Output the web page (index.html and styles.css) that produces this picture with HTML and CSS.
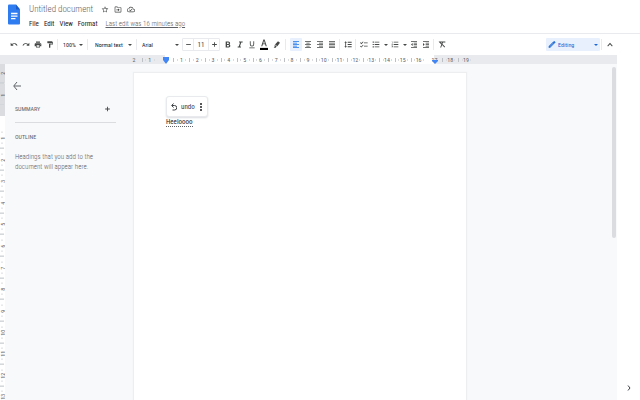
FILE: index.html
```html
<!DOCTYPE html>
<html lang="en">
<head>
<meta charset="utf-8">
<title>Untitled document</title>
<link rel="stylesheet" href="styles.css">
</head>
<body>
<header class="header">
  <svg class="logo" viewBox="0 0 12 20" aria-hidden="true">
    <path fill="#2f7cf0" d="M1 0h7l4 5v14a1 1 0 0 1-1 1H1a1 1 0 0 1-1-1V1a1 1 0 0 1 1-1z"/>
    <path fill="#1a5ccc" d="M8 0l4 5H8z"/>
    <path stroke="#fff" stroke-width="1.3" d="M3 9h6.500M3 11.600h6.500M3 14.200h4.500"/>
  </svg>
  <div class="header-text">
    <div class="title-row">
      <h1 class="title">Untitled document</h1>
      <button class="mini" aria-label="Star"><svg class="icon" viewBox="0 0 24 24"><path d="M22 9.240l-7.190-.620L12 2 9.190 8.630 2 9.240l5.460 4.730L5.820 21 12 17.270 18.180 21l-1.630-7.030L22 9.240zM12 15.400l-3.760 2.270 1-4.280-3.320-2.880 4.380-.380L12 6.100l1.710 4.040 4.380.380-3.320 2.880 1 4.280L12 15.400z"/></svg></button>
      <button class="mini" aria-label="Move"><svg class="icon" viewBox="0 0 24 24"><path d="M20 5h-8l-2-2H4a2 2 0 0 0-2 2v14c0 1.100.900 2 2 2h16c1.100 0 2-.900 2-2V7c0-1.100-.900-2-2-2zm0 14H4V5h5l2 2h9v12z"/><path d="M7 12h5V9l5 4-5 4v-3H7z"/></svg></button>
      <button class="mini" aria-label="Document status"><svg class="icon" viewBox="0 0 24 24"><path d="M19.350 10.040A7.490 7.490 0 0 0 12 4C9.110 4 6.600 5.640 5.350 8.040A5.994 5.994 0 0 0 0 14c0 3.310 2.690 6 6 6h13c2.760 0 5-2.240 5-5 0-2.640-2.050-4.780-4.650-4.960zM19 18H6c-2.210 0-4-1.790-4-4s1.790-4 4-4h.710C7.370 7.690 9.480 6 12 6c3.040 0 5.500 2.460 5.500 5.500v.500H19c1.660 0 3 1.340 3 3s-1.340 3-3 3zm-9-3.820l-2.090-2.090L6.500 13.500 10 17l6.010-6.010-1.410-1.410z"/></svg></button>
    </div>
    <nav class="menu">
      <button>File</button><button>Edit</button><button>View</button><button>Format</button>
      <a class="last-edit" href="#history">Last edit was 16 minutes ago</a>
    </nav>
  </div>
</header>

<div class="toolbar" role="toolbar">
  <button class="tool" aria-label="Undo"><svg class="icon" viewBox="0 0 24 24"><path d="M12.500 8c-2.650 0-5.050.990-6.900 2.600L2 7v9h9l-3.620-3.620A7.960 7.960 0 0 1 20.100 16l2.370-.780C21.080 11.030 17.150 8 12.500 8z"/></svg></button>
  <button class="tool" aria-label="Redo"><svg class="icon" viewBox="0 0 24 24"><path d="M18.400 10.600A10.490 10.490 0 0 0 1.540 15.220L3.900 16a8.002 8.002 0 0 1 12.720-3.620L13 16h9V7l-3.600 3.600z"/></svg></button>
  <button class="tool" aria-label="Print"><svg class="icon" viewBox="0 0 24 24"><path d="M19 8H5c-1.660 0-3 1.340-3 3v6h4v4h12v-4h4v-6c0-1.660-1.340-3-3-3zm-3 11H8v-5h8v5zm3-7a1 1 0 1 1 0-2 1 1 0 0 1 0 2zM18 3H6v4h12V3z"/></svg></button>
  <button class="tool" aria-label="Paint format"><svg class="icon" viewBox="0 0 24 24"><path d="M18 4V3c0-.550-.450-1-1-1H5c-.550 0-1 .450-1 1v4c0 .550.450 1 1 1h12c.550 0 1-.450 1-1V6h1v4H9v11c0 .550.450 1 1 1h2c.550 0 1-.450 1-1v-9h8V4h-3z"/></svg></button>
  <span class="sep"></span>
  <label class="drop zoom"><select aria-label="Zoom"><option>100%</option></select><svg class="caret" viewBox="0 0 4 2"><path d="M0 0h4L2 2z"/></svg></label>
  <span class="sep"></span>
  <label class="drop style"><select aria-label="Styles"><option>Normal text</option></select><svg class="caret" viewBox="0 0 4 2"><path d="M0 0h4L2 2z"/></svg></label>
  <span class="sep"></span>
  <label class="drop font"><select aria-label="Font"><option>Arial</option></select><svg class="caret" viewBox="0 0 4 2"><path d="M0 0h4L2 2z"/></svg></label>
  <div class="size">
    <button aria-label="Decrease font size"><svg class="icon" viewBox="0 0 24 24"><path d="M4 10.500h16v3H4z"/></svg></button>
    <input aria-label="Font size" value="11">
    <button aria-label="Increase font size"><svg class="icon" viewBox="0 0 24 24"><path d="M4 10.500h6.500V4h3v6.500H20v3h-6.500V20h-3v-6.500H4z"/></svg></button>
  </div>
  <button class="tool" aria-label="Bold"><svg class="icon" viewBox="0 0 24 24"><path d="M16.500 11.800c1.100-.800 1.900-2.100 1.900-3.300C18.400 5.500 16 3 13 3H5v18h9c2.900 0 5-2.300 5-5 0-1.900-1-3.500-2.500-4.200zM9 6h3.500a2.200 2.200 0 0 1 0 4.500H9V6zm4 12H9v-4.500h4a2.200 2.200 0 0 1 0 4.500z"/></svg></button>
  <button class="tool" aria-label="Italic"><svg class="icon" viewBox="0 0 24 24"><path d="M9 3v3h3.200L8.200 18H5v3h10v-3h-3.200l4-12H20V3z"/></svg></button>
  <button class="tool" aria-label="Underline"><svg class="icon" viewBox="0 0 24 24"><path d="M12 18a6.500 6.500 0 0 0 6.500-6.500V2H16v9.500a4 4 0 0 1-8 0V2H5.500v9.500A6.500 6.500 0 0 0 12 18zM4 21h16v2H4z"/></svg></button>
  <button class="tool" aria-label="Text color"><svg class="icon tall" viewBox="0 0 20 26" preserveAspectRatio="none"><path d="M8.500 1L3 17h2.800l1.500-4.500h5.400l1.500 4.500H17L11.500 1h-3zM8 10.500L10 4l2 6.500z"/><path fill="#000" d="M0 21h20v5H0z"/></svg></button>
  <button class="tool wide" aria-label="Highlight color"><svg class="icon" viewBox="0 0 24 24"><path d="M15 2l6 5-8 10-7-5zM5 13l6 5-3 4H2l3-4z"/></svg></button>
  <span class="sep"></span>
  <button class="tool active" aria-label="Left align"><svg class="icon" viewBox="0 0 24 24"><path d="M3 2h18v2.500H3zM3 6.500h12V9H3zM3 11h18v2.500H3zM3 15.500h12V18H3zM3 20h18v2.500H3z"/></svg></button>
  <button class="tool" aria-label="Center align"><svg class="icon" viewBox="0 0 24 24"><path d="M3 2h18v2.500H3zM7 6.500h10V9H7zM3 11h18v2.500H3zM7 15.500h10V18H7zM3 20h18v2.500H3z"/></svg></button>
  <button class="tool" aria-label="Right align"><svg class="icon" viewBox="0 0 24 24"><path d="M3 2h18v2.500H3zM9 6.500h12V9H9zM3 11h18v2.500H3zM9 15.500h12V18H9zM3 20h18v2.500H3z"/></svg></button>
  <button class="tool" aria-label="Justify"><svg class="icon" viewBox="0 0 24 24"><path d="M3 2h18v2.500H3zM3 6.500h18V9H3zM3 11h18v2.500H3zM3 15.500h18V18H3zM3 20h18v2.500H3z"/></svg></button>
  <span class="sep"></span>
  <button class="tool" aria-label="Line spacing"><svg class="icon" viewBox="0 0 24 24"><path d="M5 2l4 5H6.200v10H9l-4 5-4-5h2.800V7H1zM11 4h12v2.500H11zM11 10.800h12v2.500H11zM11 17.500h12V20H11z"/></svg></button>
  <span class="sep"></span>
  <button class="tool" aria-label="Checklist"><svg class="icon" viewBox="0 0 24 24"><path d="M12 6h11v2.300H12zM12 16h11v2.300H12zM4 11L0 7l1.600-1.600L4 7.800 9 3l1.500 1.600zM4 21l-4-4 1.600-1.600L4 17.800 9 13l1.500 1.600z"/></svg></button>
  <button class="tool" aria-label="Bulleted list"><svg class="icon" viewBox="0 0 24 24"><path d="M2 3h3.500v3.500H2zM2 10.300h3.500v3.500H2zM2 17.500h3.500V21H2zM8 3.500h14V6H8zM8 10.800h14v2.500H8zM8 18h14v2.500H8z"/></svg></button>
  <button class="more" aria-label="Bulleted list menu"><svg class="caret" viewBox="0 0 4 2"><path d="M0 0h4L2 2z"/></svg></button>
  <button class="tool" aria-label="Numbered list"><svg class="icon" viewBox="0 0 24 24"><path d="M2 17h2v.500H3v1h1v.500H2v1h3v-4H2v1zm1-9h1V3H2v1h1v4zm-1 3h1.800L2 13.100v.900h3v-1H3.200L5 10.900V10H2v1zM8 3.500h14V6H8zM8 10.800h14v2.500H8zM8 18h14v2.500H8z"/></svg></button>
  <button class="more" aria-label="Numbered list menu"><svg class="caret" viewBox="0 0 4 2"><path d="M0 0h4L2 2z"/></svg></button>
  <button class="tool" aria-label="Decrease indent"><svg class="icon" viewBox="0 0 24 24"><path d="M3 2h18v2.500H3zM11 6.500h10V9H11zM11 11h10v2.500H11zM11 15.500h10V18H11zM3 20h18v2.500H3zM3 12l5-4.500v9z"/></svg></button>
  <button class="tool" aria-label="Increase indent"><svg class="icon" viewBox="0 0 24 24"><path d="M3 2h18v2.500H3zM11 6.500h10V9H11zM11 11h10v2.500H11zM11 15.500h10V18H11zM3 20h18v2.500H3zM8 12L3 7.500v9z"/></svg></button>
  <span class="sep"></span>
  <button class="tool" aria-label="Clear formatting"><svg class="icon" viewBox="0 0 24 24"><path d="M3 3h19v3h-7l-1.800 4.500 8 8.500-1.700 2-7.300-7.500L9.500 21h-3l3.600-9.300L2 4zM8 6l3 3 1.200-3z"/></svg></button>
  <div class="mode">
    <button class="editing"><svg class="icon" viewBox="0 0 24 24"><path d="M2 17.500V22h4.500L20 8.500 15.500 4 2 17.500zM22 6.500a1.500 1.500 0 0 0 0-2L19.500 2a1.500 1.500 0 0 0-2 0L16 3.500 20.500 8zM5 19l-.500-.500 11-11 .900.900L6 19z"/></svg><span>Editing</span><svg class="caret" viewBox="0 0 4 2"><path d="M0 0h4L2 2z"/></svg></button>
    <span class="sep"></span>
    <button class="tool" aria-label="Hide the menus"><svg class="icon" viewBox="0 0 24 24"><path d="M12 7l-8 9 2 2 6-7 6 7 2-2z"/></svg></button>
  </div>
</div>

<div class="workspace">
  <div class="editor">
    <div class="ruler">
      <div class="ruler-cells">
        <span class="first">2</span><span>1</span><span class="edge-start"><svg class="marker" viewBox="0 0 6 7"><path d="M0 0h6v3L3 7 0 3z"/></svg></span><span>1</span><span>2</span><span>3</span><span>4</span><span>5</span><span>6</span><span>7</span><span>8</span><span>9</span><span>10</span><span>11</span><span>12</span><span>13</span><span>14</span><span>15</span><span>16</span><span class="edge-end">17<svg class="marker low" viewBox="0 0 6 4"><path d="M0 0h6v1L3 4 0 1z"/></svg></span><span>18</span><span>19</span>
      </div>
    </div>
    <div class="canvas">
      <div class="side-ruler">
        <div class="side-cells">
          <span class="off">2</span><span class="off">1</span><span class="half"></span><span>1</span><span>2</span><span>3</span><span>4</span><span>5</span><span>6</span><span>7</span><span>8</span><span>9</span><span>10</span><span>11</span><span>12</span><span>13</span>
        </div>
      </div>
      <aside class="outline">
        <button class="back" aria-label="Close outline"><svg viewBox="0 0 8 10"><path d="M8 5H1M4 1L.700 5 4 9"/></svg></button>
        <div class="summary">
          <h2>SUMMARY</h2>
          <button aria-label="Add summary"><svg class="icon" viewBox="0 0 24 24"><path d="M4 10.500h6.500V4h3v6.500H20v3h-6.500V20h-3v-6.500H4z"/></svg></button>
        </div>
        <h2>OUTLINE</h2>
        <p>Headings that you add to the document will appear here.</p>
      </aside>
      <main class="page">
        <div class="line">
          <p class="typed">Heeloooo</p>
          <div class="suggestion">
            <button class="undo"><svg viewBox="0 0 6 8"><path d="M2.500 0.500L.700 2.500l1.800 2M1 2.500h2.500a2 2 0 0 1 0 4.500H1.500"/></svg>undo</button>
            <button class="dots" aria-label="More options"><svg viewBox="0 0 2 8"><circle cx="1" cy="1" r="1"/><circle cx="1" cy="4" r="1"/><circle cx="1" cy="7" r="1"/></svg></button>
          </div>
        </div>
      </main>
      <div class="scrollbar"></div>
    </div>
  </div>
  <div class="side-panel">
    <button aria-label="Show side panel"><svg viewBox="0 0 4 6"><path d="M1 .500L3 3 1 5.500"/></svg></button>
  </div>
</div>
</body>
</html>
```
FILE: styles.css
```css
* {
  box-sizing: border-box;
}

body {
  margin: 0;
  height: 100vh;
  display: flex;
  flex-direction: column;
  overflow: hidden;
  background: #fff;
  color: #3c4043;
  font-family: "Roboto Condensed", Roboto, sans-serif;
  font-size: 7px;
}

h1, h2, p {
  margin: 0;
  font-weight: 400;
}

button, select, input {
  margin: 0;
  padding: 0;
  border: 0;
  background: none;
  color: inherit;
  font: inherit;
}

button {
  display: flex;
  align-items: center;
  justify-content: center;
}

svg {
  display: block;
  flex: none;
}

.icon {
  width: 8px;
  height: 9px;
  fill: #444746;
}

.caret {
  width: 4px;
  height: 2px;
  fill: #444746;
}

.header {
  display: flex;
  gap: 9px;
  height: 33px;
  padding: 4px 8px 0;
}

.logo {
  width: 12px;
  height: 21px;
}

.title-row {
  display: flex;
  align-items: center;
  gap: 5px;
  height: 11px;
}

.title {
  margin-right: 3px;
  color: #5f6368;
  font-size: 9px;
  font-weight: 300;
  line-height: 11px;
}

.menu {
  display: flex;
  align-items: center;
  gap: 5px;
  height: 9px;
  margin-top: 4px;
  color: #202124;
}

.last-edit {
  margin-left: 3px;
  color: #5f6368;
  font-weight: 300;
}

.toolbar {
  display: flex;
  align-items: center;
  height: 22px;
  padding: 0 4px 0 8px;
  border-top: 1px solid #e8eaed;
}

.tool {
  width: 12px;
  height: 13px;
  flex: none;
}

.tool.wide {
  width: 14px;
}

.tall {
  height: 11px;
}

.active {
  margin-left: 2px;
  border-radius: 1px;
  background: #e8f0fe;
}

.active .icon {
  fill: #1a73e8;
}

.more {
  width: 7px;
  height: 13px;
}

.sep {
  width: 1px;
  height: 11px;
  margin: 0 2px 0 1px;
  background: #e8eaed;
}

.drop {
  display: flex;
  align-items: center;
  justify-content: space-between;
  padding: 0 3px;
  color: #202124;
}

.drop select {
  appearance: none;
  font-size: 6px;
}

.zoom {
  width: 26px;
}

.style {
  width: 45px;
  padding-left: 5px;
}

.font {
  width: 43px;
}

.size {
  display: flex;
  width: 38px;
  height: 13px;
  margin-right: 2px;
  border: 1px solid #e8eaed;
  border-radius: 1px;
}

.size button {
  width: 10px;
}

.size .icon {
  width: 7px;
  height: 7px;
}

.size input {
  width: 16px;
  border: solid #e8eaed;
  border-width: 0 1px;
  text-align: center;
}

.mode {
  display: flex;
  align-items: center;
  margin-left: auto;
  padding-right: 20px;
}

.editing {
  width: 54px;
  height: 13px;
  gap: 2px;
  padding: 0 2px;
  border-radius: 1px;
  background: #e8f0fe;
  color: #1967d2;
  font-size: 6px;
}

.editing .icon, .editing .caret {
  fill: #1967d2;
}

.editing .caret {
  margin-left: auto;
}

.workspace {
  display: flex;
  flex: 1;
  min-height: 0;
}

.editor {
  display: flex;
  flex: 1;
  flex-direction: column;
  min-width: 0;
  background: #f8f9fa;
}

.ruler {
  height: 9px;
  padding-left: 126px;
  background: #e8eaed;
}

.ruler-cells {
  display: grid;
  grid-template-columns: repeat(22, 1fr);
  width: 348px;
  height: 9px;
  color: #5f6368;
  font-size: 6px;
  line-height: 9px;
  text-align: center;
}

.ruler-cells span {
  position: relative;
  background:
    linear-gradient(#bdc1c6, #bdc1c6) 0 50% / 1px 4px no-repeat,
    linear-gradient(#dadce0, #dadce0) 24% 50% / 1px 2px no-repeat,
    linear-gradient(#dadce0, #dadce0) 80% 50% / 1px 2px no-repeat;
}

.ruler-cells span:nth-child(n+4):nth-child(-n+19) {
  background-color: #fff;
}

.ruler-cells .first {
  background: none;
}

.ruler-cells .edge-start {
  background: linear-gradient(90deg, #e8eaed 50%, #fff 50%);
}

.ruler-cells .edge-end {
  background: linear-gradient(90deg, #fff 50%, #e8eaed 50%);
}

.marker {
  width: 6px;
  height: 7px;
  margin: 2px auto 0;
  fill: #4285f4;
}

.marker.low {
  position: absolute;
  bottom: 0;
  left: 5px;
  height: 4px;
  margin: 0;
}

.canvas {
  display: flex;
  flex: 1;
  min-height: 0;
  overflow: hidden;
}

.side-ruler {
  width: 5px;
  overflow: hidden;
  background: #fff;
}

.side-cells {
  display: grid;
  grid-template-rows: repeat(16, 1fr);
  height: 346px;
  margin-top: -2px;
  color: #5f6368;
  font-size: 6px;
  line-height: 5px;
}

.side-cells span {
  writing-mode: vertical-rl;
  transform: rotate(180deg);
  width: 5px;
  text-align: center;
  background:
    linear-gradient(#bdc1c6, #bdc1c6) 50% 0 / 4px 1px no-repeat,
    linear-gradient(#dadce0, #dadce0) 50% 24% / 2px 1px no-repeat,
    linear-gradient(#dadce0, #dadce0) 50% 78% / 2px 1px no-repeat;
}

.side-cells .off {
  background-color: #dadce0;
}

.side-cells .half {
  background: linear-gradient(#fff 50%, #dadce0 50%);
}

.outline {
  width: 129px;
  padding: 17px 18px 0 10px;
  color: #5f6368;
}

.outline h2 {
  font-size: 6px;
  line-height: 8px;
}

.outline p {
  margin-top: 11px;
  padding-right: 20px;
  color: #5f6368;
  font-weight: 300;
  line-height: 10px;
}

.back {
  width: 8px;
  height: 10px;
  margin-left: -2px;
}

.back svg {
  width: 8px;
  height: 10px;
  fill: none;
  stroke: #5f6368;
}

.summary {
  display: flex;
  align-items: center;
  justify-content: space-between;
  height: 32px;
  margin-bottom: 10px;
  padding: 4px 5px 0 0;
  border-bottom: 1px solid #dadce0;
}

.summary .icon {
  width: 7px;
  height: 8px;
}

.page {
  width: 332px;
  margin-top: 9px;
  padding: 45px 32px;
  background: #fff;
  box-shadow: 0 0 1px 1px #eceef0;
}

.line {
  position: relative;
}

.typed {
  width: fit-content;
  border-bottom: 1px dotted #5f6368;
  color: #202124;
  line-height: 8px;
}

.suggestion {
  position: absolute;
  bottom: 10px;
  left: 0;
  display: flex;
  align-items: center;
  gap: 5px;
  height: 21px;
  padding: 0 5px 0 4px;
  border: 1px solid #e8eaed;
  border-radius: 3px;
  background: #fff;
  box-shadow: 0 1px 2px #dadce0;
}

.undo {
  gap: 4px;
}

.undo svg {
  width: 6px;
  height: 8px;
  fill: none;
  stroke: #3c4043;
}

.dots svg {
  width: 2px;
  height: 8px;
  fill: #202124;
}

.scrollbar {
  width: 4px;
  height: 171px;
  margin: 3px 1px 0 auto;
  border-radius: 2px;
  background: #dadce0;
}

.side-panel {
  display: flex;
  align-items: flex-end;
  justify-content: center;
  width: 23px;
  padding-bottom: 9px;
}

.side-panel svg {
  width: 4px;
  height: 6px;
  fill: none;
  stroke: #3c4043;
}
```
